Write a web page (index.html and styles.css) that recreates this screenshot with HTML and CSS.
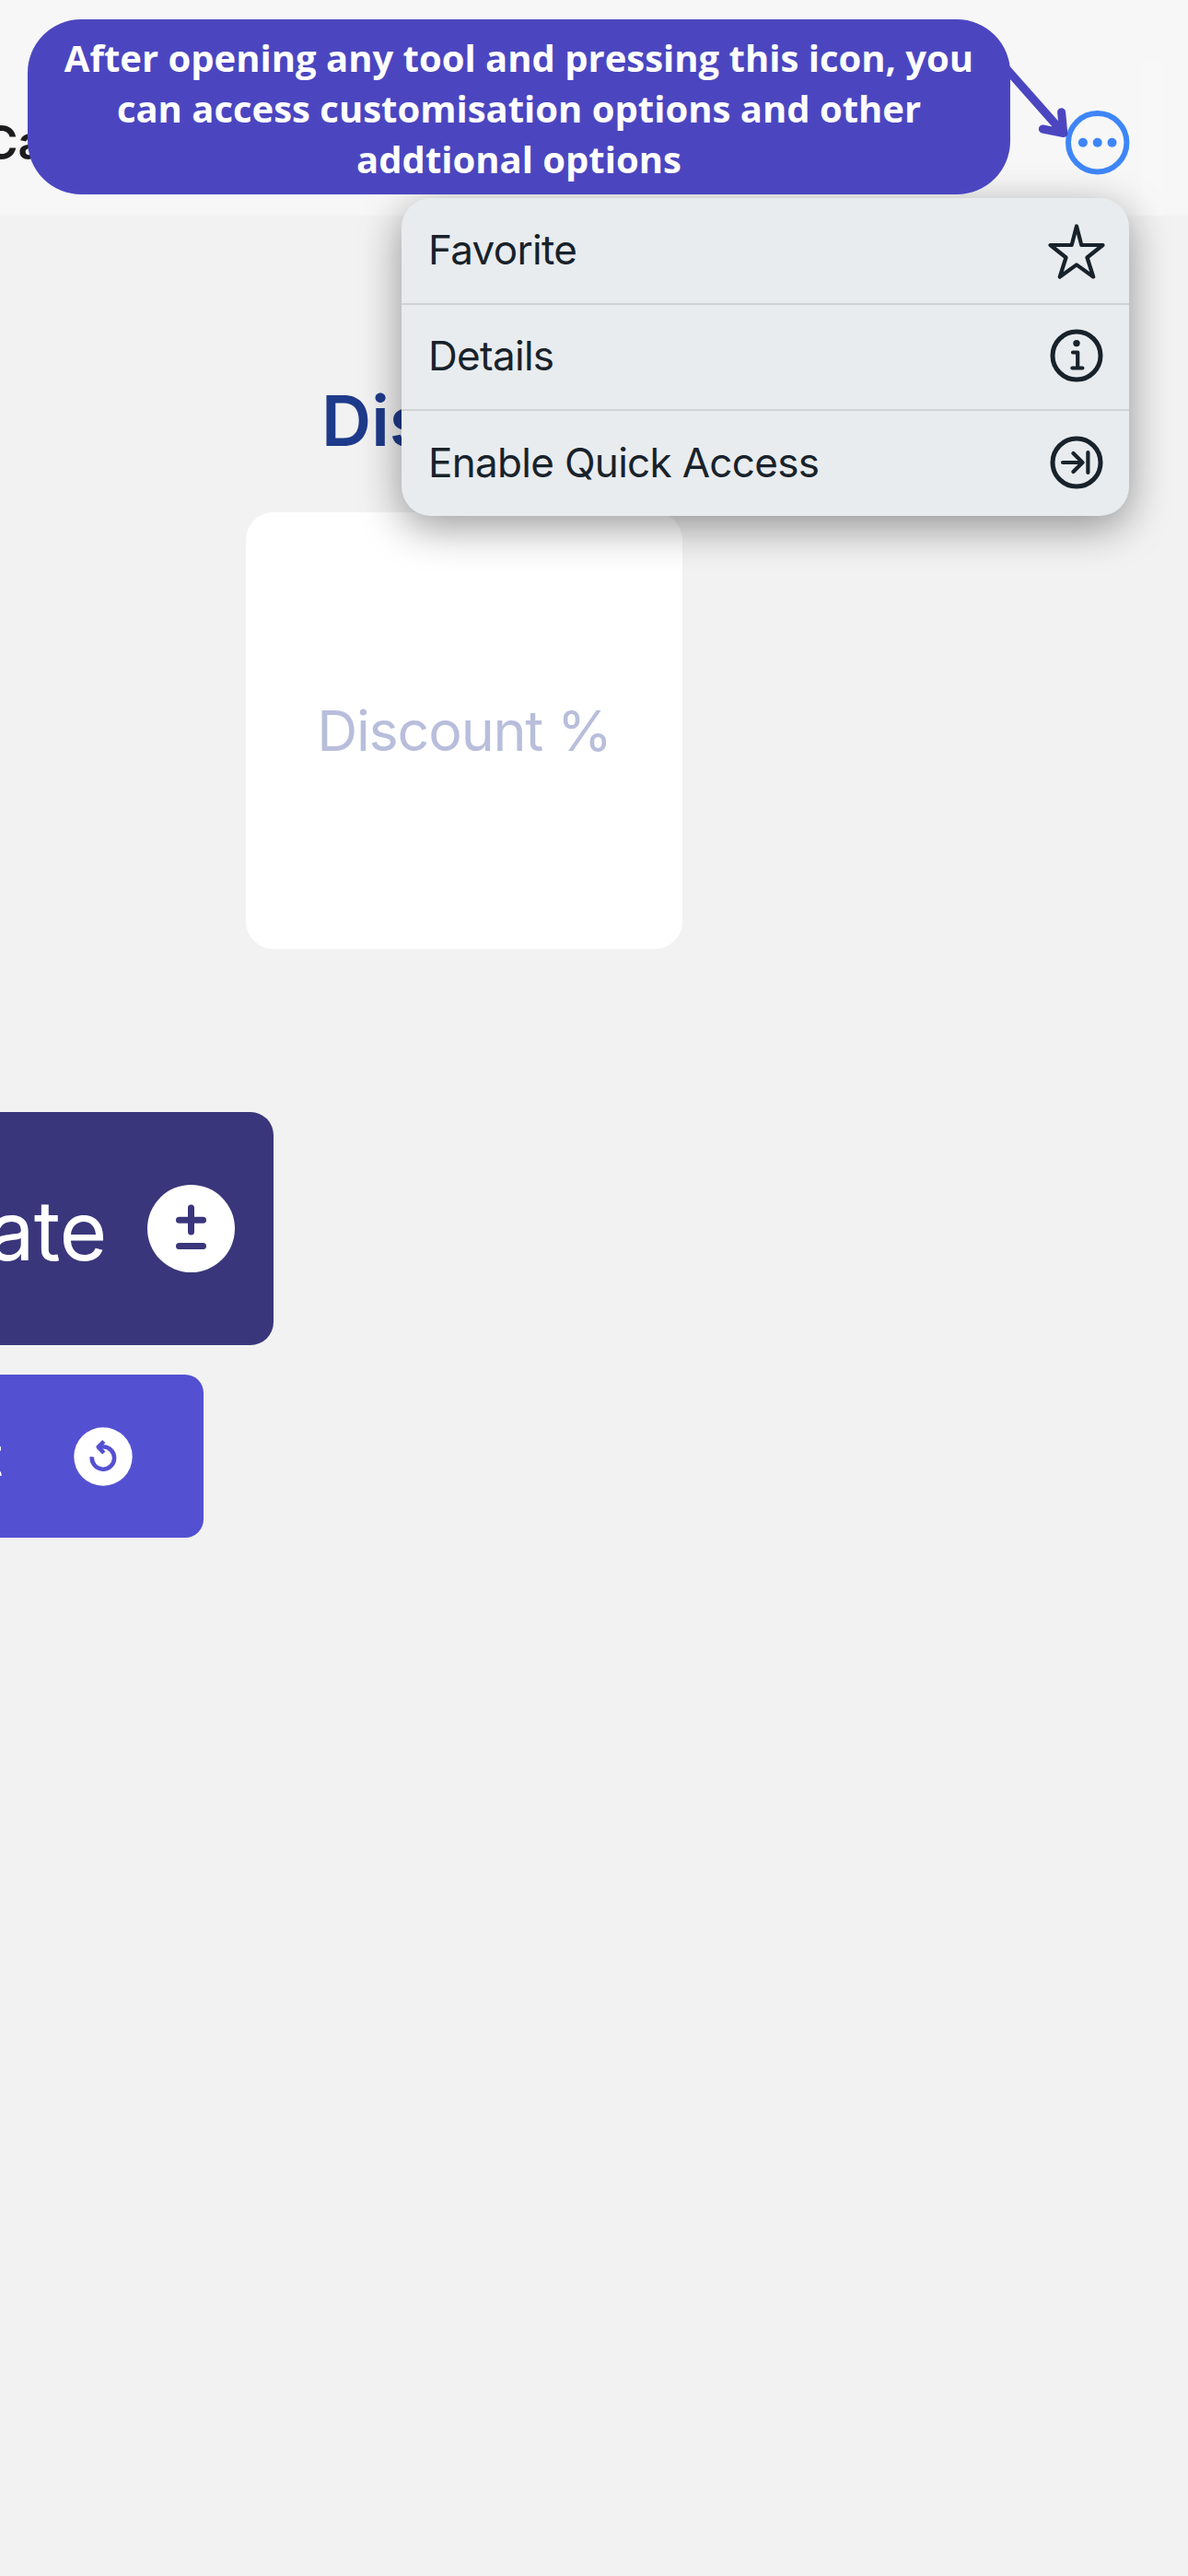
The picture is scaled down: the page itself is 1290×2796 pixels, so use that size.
FILE: index.html
```html
<!DOCTYPE html>
<html lang="en">
<head>
<meta charset="utf-8">
<title>Discount Calculator</title>
<link rel="stylesheet" href="styles.css">
</head>
<body>
<div class="screen">
  <header class="navbar">
    <h1 class="navbar-title">Calculator</h1>
    <span class="navbar-edge"></span>
    <svg class="more-icon" viewBox="0 0 70 70" width="70" height="70">
      <circle class="more-ring" cx="34.7" cy="34.7" r="31.7"/>
      <circle cx="18.9" cy="34.7" r="5"/><circle cx="34.7" cy="34.7" r="5"/><circle cx="50.5" cy="34.7" r="5"/>
    </svg>
  </header>

  <main class="content">
    <section class="field">
      <h2 class="field-title">Discount</h2>
      <div class="field-box">Discount %</div>
    </section>
    <div class="actions">
      <div class="button calculate">
        <span class="label">Calculate</span>
        <svg viewBox="0 0 95 95" width="95" height="95">
          <circle class="disc" cx="47.5" cy="47.5" r="47.5"/>
          <path class="glyph" d="M34.5 38.2H60.5M47.5 25v26M34.5 66.5H60.5"/>
        </svg>
      </div>
      <div class="button reset">
        <span class="label">Reset</span>
        <svg viewBox="0 0 64 64" width="64" height="64">
          <circle class="disc" cx="32" cy="32" r="31.7"/>
          <path class="glyph" d="M19.8 32.3A12.2 12.2 0 1 0 32 21.3H27M32.8 15.5L26.7 21.7L32.8 28"/>
        </svg>
      </div>
    </div>
  </main>

  <div class="menu">
    <div class="menu-item">
      <span>Favorite</span>
      <svg class="menu-icon" viewBox="0 0 66 66" width="66" height="66">
        <path d="M33 7.5L38.3 28H61.5L44.5 41.5L51.2 62.5L33 49.4L14.8 62.5L21.5 41.5L4.5 28H27.7Z"/>
      </svg>
    </div>
    <div class="menu-item">
      <span>Details</span>
      <svg class="menu-icon" viewBox="0 0 66 66" width="66" height="66">
        <circle class="ring" cx="33" cy="33" r="26"/>
        <circle class="dot" cx="33" cy="19.6" r="3.7"/>
        <path d="M29 29.5H34.2V46.5M28.4 46.5H39.4"/>
      </svg>
    </div>
    <div class="menu-item">
      <span>Enable Quick Access</span>
      <svg class="menu-icon" viewBox="0 0 66 66" width="66" height="66">
        <circle class="ring" cx="33" cy="33" r="26"/>
        <path d="M18 33H39.5M29.5 23L39.5 33L29.5 43M45.4 22V44"/>
      </svg>
    </div>
  </div>

  <svg class="pointer" viewBox="0 0 90 110" width="90" height="110">
    <path d="M7 18L74.8 94.6M72.6 71.7L74.8 94.6L52.3 90"/>
  </svg>
  <div class="callout">After opening any tool and pressing this icon, you<br>can access customisation options and other<br>addtional options</div>
</div>
</body>
</html>
```
FILE: styles.css
```css
* { box-sizing: border-box; }

body {
  margin: 0;
  background: #f2f2f2;
  font-family: Inter, "Liberation Sans", sans-serif;
}

.screen {
  position: relative;
  width: 1290px;
  height: 2796px;
  overflow: hidden;
  background: #f2f2f2;
}

/* Navigation bar */
.navbar {
  position: relative;
  display: flex;
  align-items: center;
  justify-content: space-between;
  height: 234px;
  padding: 76px 63px 0 0;
  background: #f7f7f7;
}

.navbar-title {
  margin: 0 0 0 -18px;
  color: #1c1c1e;
  font-size: 51px;
  font-weight: 600;
  line-height: 60px;
}

.navbar-edge {
  position: absolute;
  top: 66px;
  right: 26px;
  bottom: 0;
  width: 24px;
  background: #f8f8f8;
}

.more-icon {
  position: relative;
  fill: #3e86f8;
}

.more-ring {
  fill: none;
  stroke: #3e86f8;
  stroke-width: 6;
}

/* Page content */
.content {
  display: flex;
  flex-direction: column;
  gap: 177px;
  padding-top: 178px;
}

.field {
  width: 474px;
  margin-left: 267px;
}

.field-title {
  margin: 0 0 54px;
  color: #1e3a8a;
  font-size: 75px;
  font-weight: 600;
  line-height: 90px;
  text-indent: 82px;
}

.field-box {
  display: flex;
  align-items: center;
  justify-content: center;
  height: 474px;
  border-radius: 30px;
  background: #fff;
  color: #b8bedb;
  font-size: 61px;
  letter-spacing: -1.2px;
}

.actions {
  display: flex;
  flex-direction: column;
  align-items: flex-start;
  gap: 32px;
}

.button {
  display: flex;
  align-items: center;
  justify-content: flex-end;
  overflow: hidden;
  color: #fff;
}

.button svg { flex: none; }

.disc { fill: #fff; }

.glyph {
  fill: none;
  stroke-linecap: round;
  stroke-linejoin: round;
}

.calculate {
  width: 297px;
  height: 253px;
  gap: 44px;
  padding-right: 42px;
  border-radius: 0 25px 25px 0;
  background: #3a367b;
  font-size: 89px;
  letter-spacing: -0.5px;
}

.calculate .label { padding-top: 3px; }

.calculate .glyph { stroke: #3a367b; stroke-width: 7; }

.reset {
  width: 221px;
  height: 177px;
  gap: 77px;
  padding-right: 77px;
  border-radius: 0 20px 20px 0;
  background: #5450d2;
  font-size: 58px;
}

.reset .glyph { stroke: #5450d2; stroke-width: 4.6; stroke-linecap: butt; }

/* Dropdown menu */
.menu {
  position: absolute;
  top: 215px;
  left: 436px;
  width: 790px;
  height: 344.5px;
  border-radius: 32px;
  background: #e8ecef;
  color: #18222b;
  box-shadow: 0 12px 46px rgba(0, 0, 0, 0.4);
}

.menu-item {
  display: flex;
  align-items: center;
  justify-content: space-between;
  height: 115.5px;
  padding: 0 24px 2px 29px;
  font-size: 44px;
  letter-spacing: -0.7px;
  line-height: 54px;
}

.menu-item:first-child { height: 113.5px; }

.menu-item + .menu-item { border-top: 2px solid #d0d3d5; }

.menu-icon {
  fill: none;
  stroke: #18222b;
  stroke-width: 4.2;
  stroke-linecap: round;
  stroke-linejoin: round;
}

.ring { stroke-width: 5; }

.dot {
  fill: #18222b;
  stroke: none;
}

/* Annotation */
.pointer {
  position: absolute;
  top: 50px;
  left: 1080px;
  fill: none;
  stroke: #4b46c0;
  stroke-width: 9;
  stroke-linecap: round;
  stroke-linejoin: round;
}

.callout {
  position: absolute;
  top: 21px;
  left: 30px;
  width: 1067px;
  height: 190px;
  padding-top: 14px;
  border-radius: 58px;
  background: #4b46c0;
  color: #fff;
  font-family: "Open Sans", "Noto Sans", sans-serif;
  font-size: 40px;
  font-weight: 700;
  line-height: 55px;
  text-align: center;
  white-space: nowrap;
}
```
